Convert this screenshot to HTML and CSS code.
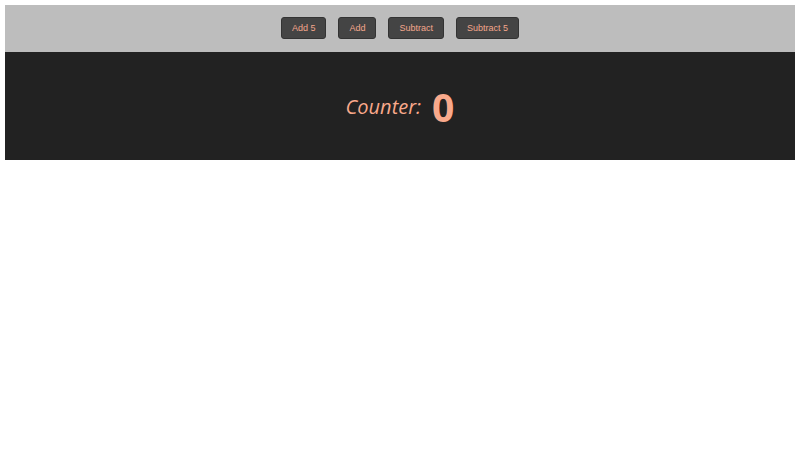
FILE: index.html
```html
<!DOCTYPE html>
<html lang="en">
<head>
    <meta charset="UTF-8">
    <meta name="viewport" content="width=device-width, initial-scale=1.0">
    <title>Counter</title>
    <link rel="stylesheet" href="styles.css">
</head>
<body>
    <div class="controls">
        <button class="btn">Add 5</button>
        <button class="btn">Add</button>
        <button class="btn">Subtract</button>
        <button class="btn">Subtract 5</button>
    </div>

    <div class="display">
        <span class="label">Counter:</span>
        <span class="value">0</span>
    </div>
</body>
</html>
```

FILE: styles.css
```css
* {
    box-sizing: border-box;
}

body {
    margin: 5px;
    background: #fff;
}

.controls {
    display: flex;
    justify-content: center;
    gap: 12px;
    height: 47px;
    padding-top: 12px;
    background: #bdbdbd;
}

.btn {
    height: 22px;
    padding: 0 10px;
    background: #444;
    color: #f4a78c;
    border: 1px solid #333;
    border-radius: 3px;
    font-family: "Liberation Sans", Arial, sans-serif;
    font-size: 9px;
    cursor: pointer;
}

.display {
    display: flex;
    justify-content: center;
    align-items: center;
    gap: 11px;
    height: 108px;
    background: #222;
    color: #f9a98b;
    font-family: "Open Sans", sans-serif;
}

.label {
    font-size: 20px;
    font-style: italic;
}

.value {
    font-size: 39px;
    font-weight: bold;
}
```
